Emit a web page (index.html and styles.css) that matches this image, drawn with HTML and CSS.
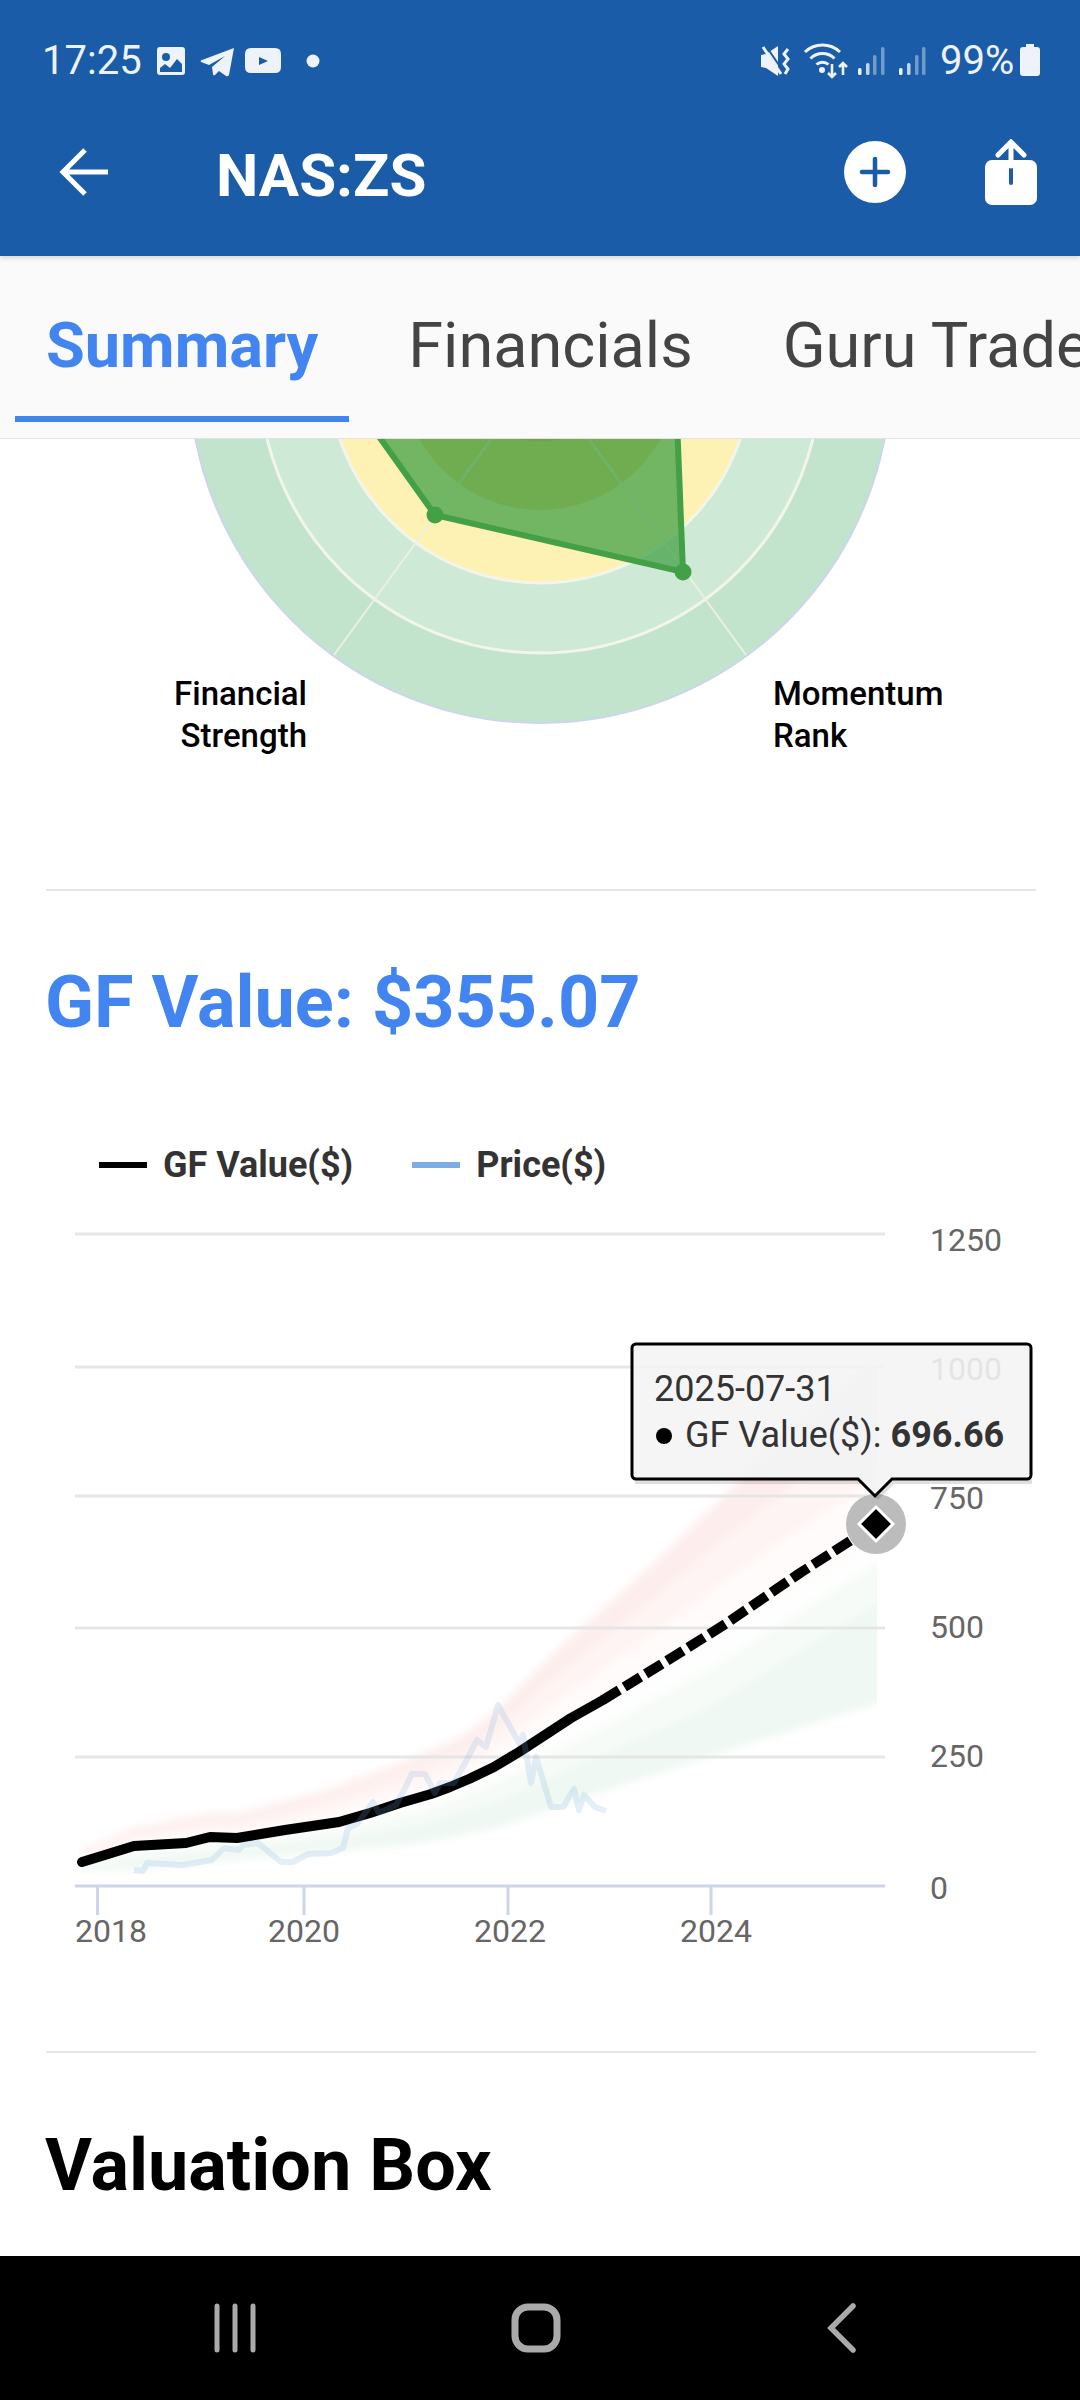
FILE: index.html
```html
<!doctype html>
<html lang="en">
<head>
    <meta charset="UTF-8">
    <title>NAS:ZS</title>
    <link rel="stylesheet" href="styles.css">
</head>
<body>
<div class="phone">
    <header class="top">
        <div class="status">
            <span class="time">17:25</span>
            <svg class="status-left" width="163" height="40" viewBox="157 40 163 40">
                <path fill="#eef3f9" fill-rule="evenodd" d="M160 47h22a3 3 0 0 1 3 3v22a3 3 0 0 1-3 3h-22a3 3 0 0 1-3-3V50a3 3 0 0 1 3-3zm6 6a4 4 0 1 0 0 8 4 4 0 0 0 0-8zm-6 15v4h22v-8l-5-5-7 9-5-4z"/>
                <path fill="#eef3f9" d="M234 48l-5 27q-1 2-3 1l-7-5-4 4q-2 1-2-1l-1-7 13-11-16 9-8-3q-1-2 1-2z"/>
                <path fill="#eef3f9" fill-rule="evenodd" d="M251 48h24q6 0 6 6v13q0 6-6 6h-24q-6 0-6-6V54q0-6 6-6zm8 9v8l9-4z"/>
                <circle cx="313" cy="61" r="6.5" fill="#eef3f9"/>
            </svg>
            <span class="spacer"></span>
            <svg class="status-right" width="170" height="40" viewBox="760 40 170 40">
                <path fill="#eef3f9" d="M761 55l5-1 12-8v30l-12-8-5-1z"/>
                <path fill="none" stroke="#1a5ca8" stroke-width="2" d="M766 46l19 28"/>
                <path fill="none" stroke="#eef3f9" stroke-width="3" d="M763 47l18 27"/>
                <path fill="none" stroke="#eef3f9" stroke-width="3" d="M788 49l-4 5 4 5-4 5 4 5-3 5"/>
                <path fill="none" stroke="#eef3f9" stroke-width="3" d="M805 52a25.4 25.4 0 0 1 35 0M810.5 58.5a17 17 0 0 1 24 0M816.5 64.5a9 9 0 0 1 12 0"/>
                <circle cx="822" cy="70" r="3" fill="#eef3f9"/>
                <path fill="none" stroke="#eef3f9" stroke-width="2.6" d="M832 64v13m-4-4l4 4 4-4M843 75V63m-4 4l4-4 4 4"/>
                <g fill="#eef3f9">
                    <rect x="858" y="68" width="3.5" height="7" rx="1.5"/>
                    <rect x="899" y="68" width="3.5" height="7" rx="1.5"/>
                </g>
                <g fill="#eef3f9" opacity=".8">
                    <rect x="866" y="63" width="3.5" height="12" rx="1.5"/>
                    <rect x="907" y="63" width="3.5" height="12" rx="1.5"/>
                </g>
                <g fill="#eef3f9" opacity=".42">
                    <rect x="873" y="55" width="3.5" height="20" rx="1.5"/>
                    <rect x="881" y="47" width="3.5" height="28" rx="1.5"/>
                    <rect x="915" y="55" width="3.5" height="20" rx="1.5"/>
                    <rect x="922" y="47" width="3.5" height="28" rx="1.5"/>
                </g>
            </svg>
            <span class="battery-text">99%</span>
            <svg class="battery" width="20" height="32" viewBox="0 0 20 32">
                <path fill="#eef3f9" d="M6 0h8v3h3q3 0 3 3v23q0 3-3 3H3q-3 0-3-3V6q0-3 3-3h3z"/>
            </svg>
        </div>
        <div class="appbar">
            <svg class="back" width="50" height="50" viewBox="0 0 50 50">
                <path fill="none" stroke="#fff" stroke-width="5" d="M49 25H4M26 3L4 25l22 22"/>
            </svg>
            <h1 class="ticker">NAS:ZS</h1>
            <svg class="add" width="62" height="62" viewBox="0 0 62 62">
                <circle cx="31" cy="31" r="31" fill="#fff"/>
                <path fill="none" stroke="#1a5ca8" stroke-width="4.5" stroke-linecap="round" d="M31 18v26M18 31h26"/>
            </svg>
            <svg class="share" width="52" height="66" viewBox="0 0 52 66">
                <rect x="0" y="21" width="52" height="45" rx="7" fill="#fff"/>
                <path fill="none" stroke="#1a5ca8" stroke-width="4" stroke-linecap="round" d="M26 26v18"/>
                <path fill="none" stroke="#fff" stroke-width="5" stroke-linecap="round" d="M26 27V3M13 16L26 3l13 13"/>
            </svg>
        </div>
    </header>

    <nav class="tabs">
        <a class="tab active">Summary</a>
        <a class="tab">Financials</a>
        <a class="tab">Guru Trades</a>
    </nav>

    <main class="content">
        <svg class="radar" width="1080" height="450" viewBox="0 439 1080 450">
            <circle cx="540" cy="372" r="351" class="ring-outer"/>
            <circle cx="540" cy="372" r="281" class="ring-2"/>
            <circle cx="540" cy="372" r="211" class="ring-3"/>
            <circle cx="540" cy="372" r="138" class="ring-4"/>
            <circle cx="540" cy="372" r="70" class="ring-5"/>
            <path class="spoke" d="M540 372L334 655M540 372L746 655"/>
            <path class="area" d="M435 515L683 572L675 370L340 382z"/>
            <circle cx="435" cy="515" r="8.5" class="dot"/>
            <circle cx="683" cy="572" r="8.5" class="dot"/>
            <text class="radar-label" x="307" y="705" text-anchor="end">Financial</text>
            <text class="radar-label" x="307" y="747" text-anchor="end">Strength</text>
            <text class="radar-label" x="773" y="705">Momentum</text>
            <text class="radar-label" x="773" y="747">Rank</text>
        </svg>

        <div class="divider"></div>

        <h2 class="value-title">GF Value: $355.07</h2>

        <div class="legend">
            <span class="legend-item"><i class="swatch swatch-black"></i>GF Value($)</span>
            <span class="legend-item"><i class="swatch swatch-blue"></i>Price($)</span>
        </div>

        <svg class="chart" width="1080" height="861" viewBox="0 1190 1080 861">
            <defs>
                <filter id="soft" x="-5%" y="-5%" width="110%" height="110%"><feGaussianBlur stdDeviation="4"/></filter>
                <clipPath id="bandclip"><rect x="78" y="1190" width="799" height="720"/></clipPath>
            </defs>

            <!-- red band above the line -->
            <g clip-path="url(#bandclip)">
                <g filter="url(#soft)">
                    <path fill="#fdeeed" d="M82 1850L134 1828L208 1813L239 1813L327 1790L408 1760L461 1737L500 1707L560 1647L660 1557L737 1483L900 1345V1525L737 1617L660 1665L560 1725L500 1763L461 1784L408 1801L327 1824L239 1838L208 1838L134 1846L82 1862z"/>
                    <path fill="#fef4f3" d="M82 1854L134 1834L208 1821L239 1821L327 1801L408 1774L461 1753L500 1726L560 1673L660 1593L737 1528L900 1400V1525L737 1617L660 1665L560 1725L500 1763L461 1784L408 1801L327 1824L239 1838L208 1838L134 1846L82 1862z"/>
                    <path fill="#fffbfa" d="M82 1858L134 1840L208 1830L239 1830L327 1812L408 1787L461 1768L500 1744L560 1699L660 1629L737 1572L900 1460V1525L737 1617L660 1665L560 1725L500 1763L461 1784L408 1801L327 1824L239 1838L208 1838L134 1846L82 1862z"/>
                    <!-- green band below the line -->
                    <path fill="#eff8f2" d="M82 1870L136 1870L232 1860L346 1850L423 1843L500 1827L557 1807L607 1790L707 1757L900 1696V1525L707 1636L607 1698L557 1727L500 1763L423 1797L346 1820L232 1838L136 1846L82 1862z"/>
                    <path fill="#f6fbf7" d="M82 1867L136 1860L232 1851L346 1838L423 1825L500 1801L557 1775L607 1753L707 1709L900 1590V1525L707 1636L607 1698L557 1727L500 1763L423 1797L346 1820L232 1838L136 1846L82 1862z"/>
                    <path fill="#fdfefd" d="M82 1864L136 1853L232 1845L346 1829L423 1811L500 1782L557 1751L607 1726L707 1672L900 1550V1525L707 1636L607 1698L557 1727L500 1763L423 1797L346 1820L232 1838L136 1846L82 1862z"/>
                </g>
            </g>

            <g class="grid">
                <path d="M75 1234H885M75 1367H885M75 1496H885M75 1628H885M75 1757H885"/>
            </g>
            <path class="axis" d="M75 1886H885M97.5 1886V1915M304 1886V1915M508 1886V1915M711 1886V1915"/>

            <g class="tick">
                <text x="930" y="1251">1250</text>
                <text x="930" y="1380">1000</text>
                <text x="930" y="1509">750</text>
                <text x="930" y="1638">500</text>
                <text x="930" y="1767">250</text>
                <text x="930" y="1899">0</text>
                <text x="75" y="1942">2018</text>
                <text x="304" y="1942" text-anchor="middle">2020</text>
                <text x="510" y="1942" text-anchor="middle">2022</text>
                <text x="716" y="1942" text-anchor="middle">2024</text>
            </g>

            <path class="gf-line" d="M82 1862L134 1846L186 1843L210 1837L237 1838L285 1830L339 1822L370 1813L400 1803L431 1794L450 1787L469 1779L494 1767L519 1752L545 1735L571 1718L587 1709L603 1700"/>
            <path class="gf-line gf-dash" d="M603 1700L665 1662L727 1623L800 1573L875 1525"/>
            <path class="price-line" d="M134 1870L143 1871L147 1863L182 1865L212 1860L224 1848L239 1850L243 1845L258 1843L281 1862L293 1862L308 1854L331 1853L343 1848L348 1828L358 1823L373 1802L379 1813L396 1805L404 1790L412 1774L425 1774L435 1793L440 1783L454 1783L465 1763L477 1740L486 1747L498 1705L519 1743L523 1735L531 1783L536 1757L551 1807L563 1807L574 1789L579 1810L584 1795L595 1807L606 1811"/>

            <circle class="halo" cx="876" cy="1524" r="30"/>
            <path class="marker" d="M876 1507L893 1524L876 1541L859 1524z"/>

            <!-- tooltip -->
            <path class="tip-shadow" d="M635 1347H1032V1484H894L878 1500L862 1484H635z"/>
            <path class="tip" d="M636 1344H1027a4 4 0 0 1 4 4V1475a4 4 0 0 1-4 4H892L875 1496L858 1479H636a4 4 0 0 1-4-4V1348a4 4 0 0 1 4-4z"/>
            <text class="tip-text" x="654" y="1401">2025-07-31</text>
            <circle cx="664" cy="1436" r="8" fill="#000"/>
            <text class="tip-text" x="685" y="1447">GF Value($): <tspan class="tip-bold">696.66</tspan></text>
        </svg>

        <div class="divider"></div>

        <h2 class="box-title">Valuation Box</h2>
    </main>

    <footer class="navbar">
        <svg width="44" height="50" viewBox="0 0 44 50"><path class="nav-icon thin" d="M4 3V47M22 3V47M40 3V47"/></svg>
        <svg width="50" height="50" viewBox="0 0 50 50"><rect class="nav-icon" x="4" y="4" width="42" height="42" rx="13"/></svg>
        <svg width="32" height="50" viewBox="0 0 32 50"><path class="nav-icon back-icon" d="M28 3L6 25l22 22"/></svg>
    </footer>
</div>
</body>
</html>
```

FILE: styles.css
```css
*{
    margin: 0;
    padding: 0;
    box-sizing: border-box;
}
html,body{
    width: 1080px;
    height: 2400px;
    overflow: hidden;
    background: #fff;
    font-family: Roboto, "Liberation Sans", sans-serif;
}
.phone{
    width: 1080px;
    height: 2400px;
    display: flex;
    flex-direction: column;
}
.top{
    height: 256px;
    background: #1a5ca8;
    box-shadow: 0 2px 5px rgba(0,0,0,.15);
    position: relative;
    z-index: 2;
}
.status{
    height: 120px;
    padding: 0 40px 0 42px;
    display: flex;
    align-items: center;
    color: #eef3f9;
    font-size: 40px;
}
.time{
    width: 115px;
}
.spacer{
    flex: 1;
}
.battery-text{
    margin-left: 10px;
    width: 80px;
}
.appbar{
    height: 136px;
    padding: 0 43px 32px 59px;
    display: flex;
    align-items: center;
}
.ticker{
    margin-left: 107px;
    padding-top: 6px;
    flex: 1;
    color: #fff;
    font-size: 60px;
    font-weight: 700;
}
.add{
    margin-right: 79px;
}
.tabs{
    height: 183px;
    padding: 0 0 16px 15px;
    background: #fafafa;
    border-bottom: 1px solid #e2e2e2;
    display: flex;
    gap: 28px;
    overflow: hidden;
}
.tab{
    padding: 18px 31px 0;
    border-bottom: 6px solid transparent;
    display: flex;
    align-items: center;
    white-space: nowrap;
    color: #444;
    font-size: 63px;
}
.tab.active{
    color: #4285f0;
    font-weight: 700;
    border-bottom-color: #4285f0;
}
.content{
    flex: 1;
    overflow: hidden;
}
.radar,.chart{
    display: block;
}
.ring-outer{
    fill: #c2e3cc;
    stroke: #ccd6eb;
    stroke-width: 2;
}
.ring-2{
    fill: #cfe9d7;
    stroke: #f3f5ea;
    stroke-width: 3;
}
.ring-3{
    fill: #fdf2b3;
    stroke: #f3f5ea;
    stroke-width: 3;
}
.ring-4{
    fill: #f8d06c;
}
.ring-5{
    fill: #eeb06a;
}
.spoke{
    fill: none;
    stroke: #ebf0e6;
    stroke-width: 2;
}
.area{
    fill: rgba(67,160,71,.75);
    stroke: #43a047;
    stroke-width: 6;
}
.dot{
    fill: #43a047;
}
.radar-label{
    font-size: 33px;
    font-weight: 500;
    fill: #000;
}
.divider{
    height: 2px;
    margin: 0 44px 0 46px;
    background: #e6e6e6;
}
.value-title{
    margin: 67px 0 0 45px;
    height: 90px;
    line-height: 90px;
    color: #4285f0;
    font-size: 72px;
    font-weight: 700;
}
.legend{
    margin-top: 92px;
    padding-left: 99px;
    height: 50px;
    display: flex;
    align-items: center;
    gap: 59px;
}
.legend-item{
    display: flex;
    align-items: center;
    gap: 16px;
    color: #333;
    font-size: 36px;
    font-weight: 700;
}
.swatch{
    width: 48px;
    height: 6px;
}
.swatch-black{
    background: #000;
}
.swatch-blue{
    background: #7cade0;
}
.grid path{
    fill: none;
    stroke: #e6e6e6;
    stroke-width: 3;
}
.axis{
    fill: none;
    stroke: #ccd6eb;
    stroke-width: 3;
}
.tick text{
    font-size: 32px;
    fill: #666;
}
.gf-line{
    fill: none;
    stroke: #000;
    stroke-width: 10;
    stroke-linejoin: round;
    stroke-linecap: round;
}
.gf-dash{
    stroke-linecap: butt;
    stroke-dasharray: 19 6;
}
.price-line{
    fill: none;
    stroke: #7cade0;
    stroke-width: 6;
    stroke-linejoin: round;
    opacity: .2;
}
.halo{
    fill: #bcbcbc;
}
.marker{
    fill: #000;
    stroke: #fff;
    stroke-width: 3;
}
.tip-shadow{
    fill: rgba(0,0,0,.12);
}
.tip{
    fill: rgba(247,247,247,.88);
    stroke: #000;
    stroke-width: 3;
}
.tip-text{
    font-size: 36px;
    fill: #333;
}
.tip-bold{
    font-weight: 700;
}
.box-title{
    margin: 68px 0 0 45px;
    height: 90px;
    line-height: 90px;
    color: #000;
    font-size: 72px;
    font-weight: 700;
}
.navbar{
    height: 144px;
    padding-left: 213px;
    background: #000;
    display: grid;
    grid-template-columns: 298px 314px 1fr;
    align-items: center;
    justify-items: start;
}
.nav-icon{
    fill: none;
    stroke: #aaa;
    stroke-width: 7;
}
.nav-icon.thin{
    stroke-width: 5;
    stroke-linecap: round;
}
.back-icon{
    stroke-width: 5.5;
    stroke-linecap: round;
}
```
